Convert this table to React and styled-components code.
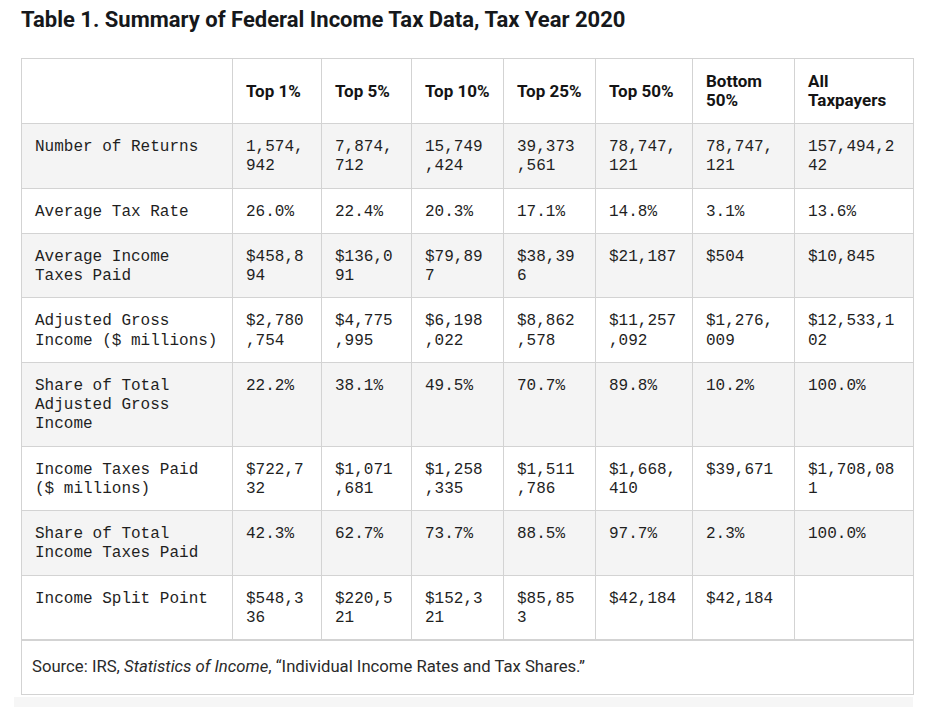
import React from "react";
import styled, { createGlobalStyle } from "styled-components";

const GlobalStyle = createGlobalStyle`
  html, body { margin: 0; padding: 0; background: #ffffff; }
  * { box-sizing: border-box; }
`;

const Page = styled.div`
  padding: 7px 12px 0 21px;
  font-family: Roboto, "Liberation Sans", sans-serif;
  color: #1b1b1b;
`;

const Title = styled.h2`
  margin: 0 0 25px 0;
  font-family: Roboto, "Liberation Sans", sans-serif;
  font-weight: 700;
  font-size: 22px;
  line-height: 26px;
  color: #16181b;
`;

const Table = styled.table`
  width: 892px;
  border-collapse: collapse;
  table-layout: fixed;
  border: 1px solid #d3d3d3;
`;

const HeadCell = styled.th`
  border: 1px solid #d3d3d3;
  padding: 13px;
  text-align: left;
  vertical-align: middle;
  font-family: Roboto, "Liberation Sans", sans-serif;
  font-weight: 700;
  font-size: 17px;
  line-height: 19px;
  color: #141414;
  background: #ffffff;
`;

const Row = styled.tr`
  background: ${(p) => (p.$shaded ? "#f4f4f4" : "#ffffff")};
`;

const Cell = styled.td`
  border: 1px solid #d3d3d3;
  padding: 14px 13px 11px 13px;
  vertical-align: top;
  font-family: "Liberation Mono", "DejaVu Sans Mono", monospace;
  font-size: 16px;
  line-height: 19.25px;
  color: #1f1f1f;
  overflow-wrap: anywhere;
`;

const FootCell = styled.td`
  border: 1px solid #d3d3d3;
  border-top-width: 2px;
  padding: 16px 10px 17px 10px;
  font-family: Roboto, "Liberation Sans", sans-serif;
  font-size: 16.7px;
  line-height: 20px;
  color: #2a2a2a;
  background: #ffffff;
`;

const Shadow = styled.div`
  margin: 2px 0 0 -7px;
  height: 12px;
  background: #f6f6f6;
`;

const widths = [211, 89, 90, 92, 92, 97, 102, 119];

const headers = ["", "Top 1%", "Top 5%", "Top 10%", "Top 25%", "Top 50%", "Bottom 50%", "All Taxpayers"];

const rows = [
  ["Number of Returns", "1,574,942", "7,874,712", "15,749,424", "39,373,561", "78,747,121", "78,747,121", "157,494,242"],
  ["Average Tax Rate", "26.0%", "22.4%", "20.3%", "17.1%", "14.8%", "3.1%", "13.6%"],
  ["Average Income Taxes Paid", "$458,894", "$136,091", "$79,897", "$38,396", "$21,187", "$504", "$10,845"],
  ["Adjusted Gross Income ($ millions)", "$2,780,754", "$4,775,995", "$6,198,022", "$8,862,578", "$11,257,092", "$1,276,009", "$12,533,102"],
  ["Share of Total Adjusted Gross Income", "22.2%", "38.1%", "49.5%", "70.7%", "89.8%", "10.2%", "100.0%"],
  ["Income Taxes Paid ($ millions)", "$722,732", "$1,071,681", "$1,258,335", "$1,511,786", "$1,668,410", "$39,671", "$1,708,081"],
  ["Share of Total Income Taxes Paid", "42.3%", "62.7%", "73.7%", "88.5%", "97.7%", "2.3%", "100.0%"],
  ["Income Split Point", "$548,336", "$220,521", "$152,321", "$85,853", "$42,184", "$42,184", ""],
];

export default function App() {
  return (
    <Page>
      <GlobalStyle />
      <Title>Table 1. Summary of Federal Income Tax Data, Tax Year 2020</Title>
      <Table>
        <colgroup>
          {widths.map((w, i) => (
            <col key={i} style={{ width: w }} />
          ))}
        </colgroup>
        <thead>
          <tr>
            {headers.map((h, i) => (
              <HeadCell key={i}>{h}</HeadCell>
            ))}
          </tr>
        </thead>
        <tbody>
          {rows.map((r, ri) => (
            <Row key={ri} $shaded={ri % 2 === 0}>
              {r.map((c, ci) => (
                <Cell key={ci}>{c}</Cell>
              ))}
            </Row>
          ))}
          <tr>
            <FootCell colSpan={8}>
              Source: IRS, <em>Statistics of Income</em>, “Individual Income Rates and Tax Shares.”
            </FootCell>
          </tr>
        </tbody>
      </Table>
      <Shadow />
    </Page>
  );
}
